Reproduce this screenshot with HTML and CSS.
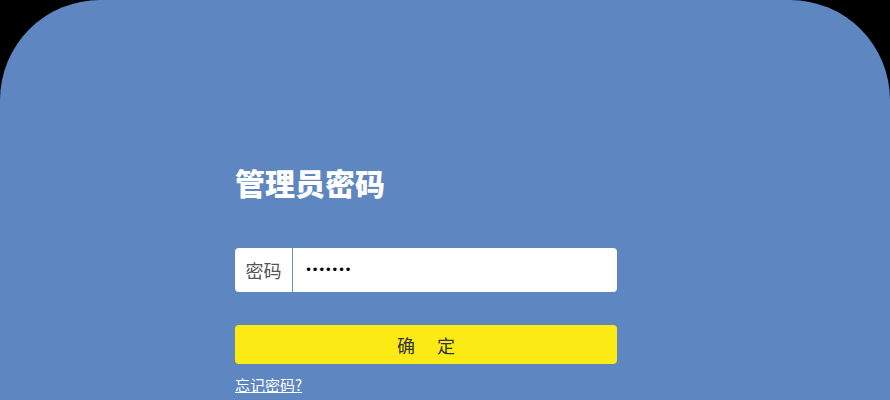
FILE: index.html
```html
<!DOCTYPE html>
<html lang="zh-CN">
<head>
<meta charset="utf-8">
<link rel="stylesheet" href="styles.css">
</head>
<body>
<main class="panel">
  <form class="login">
    <h1 class="title">管理员密码</h1>
    <div class="field">
      <label class="field-label" for="pwd">密码</label>
      <input class="field-input" id="pwd" type="password" value="1234567">
    </div>
    <button class="submit" type="button">确　定</button>
    <a class="forgot" href="#">忘记密码?</a>
  </form>
</main>
</body>
</html>
```
FILE: styles.css
```css
html, body {
  margin: 0;
  padding: 0;
  background: #000;
  height: 100%;
  overflow: hidden;
}
.panel {
  background: #5e86c1;
  min-height: 400px;
  border-radius: 100px 100px 0 0;
  padding-top: 160px;
  box-sizing: border-box;
  font-family: "Noto Sans CJK SC", "Noto Sans", sans-serif;
}
.login {
  width: 382px;
  margin-left: 235px;
  display: flex;
  flex-direction: column;
}
.title {
  margin: 0;
  font-size: 30px;
  line-height: 45px;
  font-weight: 900;
  color: #fff;
}
.field {
  margin-top: 43px;
  height: 44px;
  background: #fff;
  border-radius: 4px;
  display: flex;
  align-items: center;
}
.field-label {
  width: 58px;
  height: 44px;
  box-sizing: border-box;
  border-right: 1px solid #6e8fc4;
  font-size: 18px;
  color: #555;
  display: flex;
  align-items: center;
  justify-content: center;
}
.field-input {
  flex: 1;
  border: 0;
  outline: none;
  background: transparent;
  height: 44px;
  padding: 0 12px;
  font-size: 12px;
  color: #000;
  font-family: "DejaVu Sans", sans-serif;
  letter-spacing: -0.5px;
}
.submit {
  margin-top: 33px;
  height: 39px;
  border: 0;
  border-radius: 4px;
  background: #fbea14;
  color: #333;
  font-size: 18px;
  font-family: "Noto Sans CJK SC", sans-serif;
  letter-spacing: 2px;
  text-indent: 2px;
  padding: 0;
}
.forgot {
  margin-top: 9px;
  align-self: flex-start;
  font-size: 15px;
  line-height: 24px;
  color: #fff;
  text-decoration: underline;
}
```
